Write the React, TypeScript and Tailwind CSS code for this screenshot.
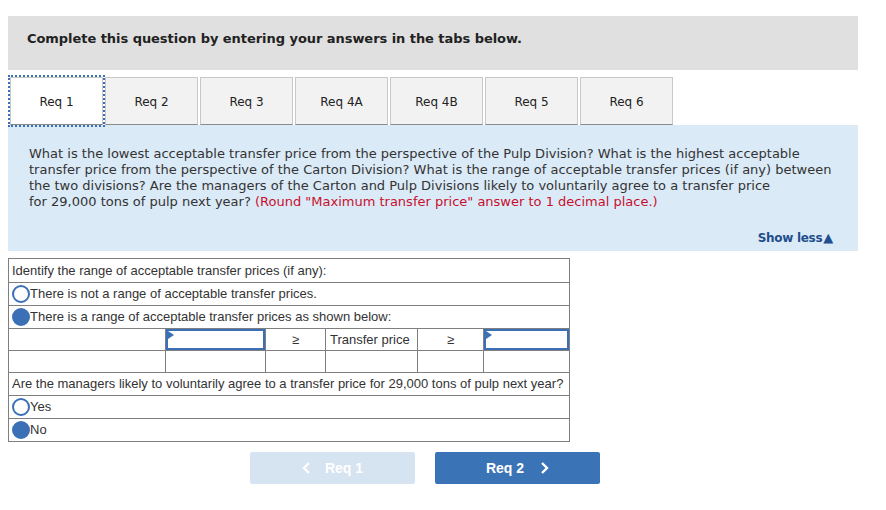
import React from "react";

const tabs = ["Req 1", "Req 2", "Req 3", "Req 4A", "Req 4B", "Req 5", "Req 6"];

const Radio = ({ checked }: { checked?: boolean }) => (
  <span
    className={
      "inline-block h-[18px] w-[18px] shrink-0 rounded-full border-2 border-[#3b70b7] " +
      (checked ? "bg-[#3b70b7]" : "bg-white")
    }
  />
);

const InputCell = () => (
  <td className="relative border border-[#7f7f7f] p-0">
    <div className="relative h-[21px] w-full border-2 border-[#3b70b7] bg-white">
      <span className="absolute left-0 top-0 h-0 w-0 border-y-[4px] border-l-[6px] border-y-transparent border-l-[#3b70b7]" />
    </div>
  </td>
);

export default function App() {
  return (
    <div className="h-[510px] w-[886px] bg-white px-2 pt-4">
      <div className="h-[54px] w-[850px] bg-[#e0e0e0] pl-[19px] pt-[13px] font-['DejaVu_Sans',sans-serif] text-[13px] font-bold tracking-[-0.05px] text-[#222]">
        Complete this question by entering your answers in the tabs below.
      </div>

      <div className="mt-[7px] flex gap-[2px] pl-[2px] font-['DejaVu_Sans',sans-serif] text-[12px] text-[#222]">
        {tabs.map((t, i) => (
          <div
            key={t}
            className={
              "flex h-[48px] w-[93px] items-center justify-center border border-b-[#8a8a8a] border-[#c8c8c8] pt-[1px] " +
              (i === 0
                ? "bg-white outline-2 outline-dotted outline-[#3b70b7]"
                : "bg-[#f2f2f2]")
            }
          >
            {t}
          </div>
        ))}
      </div>

      <div className="flex h-[126px] w-[850px] flex-col justify-between bg-[#dbeaf7] pb-[5px] pl-[21px] pr-[25px] pt-[21px] font-['DejaVu_Sans',sans-serif] text-[13px] leading-[16px] text-[#333]">
        <p>
          What is the lowest acceptable transfer price from the perspective of the Pulp Division? What is the highest acceptable
          <br />
          transfer price from the perspective of the Carton Division? What is the range of acceptable transfer prices (if any) between
          <br />
          the two divisions? Are the managers of the Carton and Pulp Divisions likely to voluntarily agree to a transfer price
          <br />
          for 29,000 tons of pulp next year?{" "}
          <span className="text-[#c8102e]">
            (Round "Maximum transfer price" answer to 1 decimal place.)
          </span>
        </p>
        <div className="self-end text-[12px] font-bold tracking-[-0.3px] text-[#1f4f8c]">
          Show less<span className="ml-[1px] text-[13px]">▲</span>
        </div>
      </div>

      <table className="mt-[7px] w-[561px] table-fixed border-collapse font-['Liberation_Sans',Arial,sans-serif] text-[13px] text-[#333]">
        <colgroup>
          <col className="w-[157px]" />
          <col className="w-[100px]" />
          <col className="w-[60px]" />
          <col className="w-[92px]" />
          <col className="w-[66px]" />
          <col className="w-[86px]" />
        </colgroup>
        <tbody>
          <tr className="h-[24px]">
            <td colSpan={6} className="border border-[#7f7f7f] pl-[3px]">
              Identify the range of acceptable transfer prices (if any):
            </td>
          </tr>
          <tr className="h-[23px]">
            <td colSpan={6} className="border border-[#7f7f7f] pl-[3px]">
              <div className="flex items-center">
                <Radio />
                <span>There is not a range of acceptable transfer prices.</span>
              </div>
            </td>
          </tr>
          <tr className="h-[23px]">
            <td colSpan={6} className="border border-[#7f7f7f] pl-[3px]">
              <div className="flex items-center">
                <Radio checked />
                <span>There is a range of acceptable transfer prices as shown below:</span>
              </div>
            </td>
          </tr>
          <tr className="h-[22px]">
            <td className="border border-[#7f7f7f]" />
            <InputCell />
            <td className="border border-[#7f7f7f] text-center">≥</td>
            <td className="border border-[#7f7f7f] pl-[4px]">Transfer price</td>
            <td className="border border-[#7f7f7f] text-center">≥</td>
            <InputCell />
          </tr>
          <tr className="h-[22px]">
            <td className="border border-[#7f7f7f]" />
            <td className="border border-[#7f7f7f]" />
            <td className="border border-[#7f7f7f]" />
            <td className="border border-[#7f7f7f]" />
            <td className="border border-[#7f7f7f]" />
            <td className="border border-[#7f7f7f]" />
          </tr>
          <tr className="h-[23px]">
            <td colSpan={6} className="border border-[#7f7f7f] pl-[3px]">
              Are the managers likely to voluntarily agree to a transfer price for 29,000 tons of pulp next year?
            </td>
          </tr>
          <tr className="h-[23px]">
            <td colSpan={6} className="border border-[#7f7f7f] pl-[3px]">
              <div className="flex items-center">
                <Radio />
                <span>Yes</span>
              </div>
            </td>
          </tr>
          <tr className="h-[23px]">
            <td colSpan={6} className="border border-[#7f7f7f] pl-[3px]">
              <div className="flex items-center">
                <Radio checked />
                <span>No</span>
              </div>
            </td>
          </tr>
        </tbody>
      </table>

      <div className="ml-[242px] mt-[10px] flex gap-[20px] font-['Liberation_Sans',Arial,sans-serif] text-[14px] font-bold text-white">
        <button className="flex h-[32px] w-[165px] items-center justify-center gap-[14px] rounded-[2px] bg-[#d6e3f1]">
          <svg width="9" height="12" viewBox="0 0 9 12" fill="none">
            <polyline points="7,1 2,6 7,11" stroke="white" strokeWidth="2.4" />
          </svg>
          <span>Req 1</span>
        </button>
        <button className="flex h-[32px] w-[165px] items-center justify-center gap-[16px] rounded-[2px] bg-[#3b73b7]">
          <span>Req 2</span>
          <svg width="9" height="12" viewBox="0 0 9 12" fill="none">
            <polyline points="2,1 7,6 2,11" stroke="white" strokeWidth="2.4" />
          </svg>
        </button>
      </div>
    </div>
  );
}
